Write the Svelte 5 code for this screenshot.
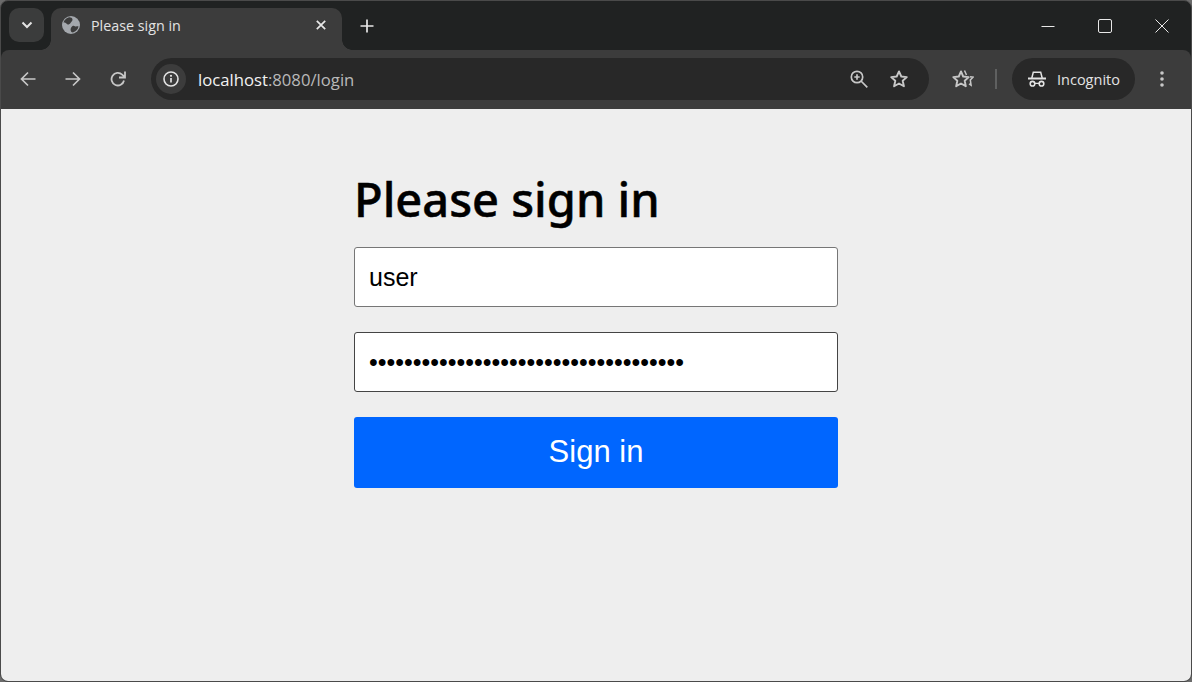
<script lang="ts">
  let username = $state("user");
  let password = $state("ffffffffffffffffffffffffffffffffffff");
  const host = "localhost";
  const rest = ":8080/login";
</script>

<div class="window">
  <header class="tabstrip">
    <button class="tab-search" aria-label="Search tabs">
      <svg width="12" height="8" viewBox="0 0 12 8"><path d="M1.5 1.5 6 6l4.500-4.500" fill="none" stroke="#e3e3e3" stroke-width="2"/></svg>
    </button>
    <div class="tab">
      <svg class="globe" width="18" height="18" viewBox="0 0 18 18">
        <circle cx="9" cy="9" r="9" fill="#a4a8ad"/>
        <path d="M6.500 1.500C4 2.300 2.200 4.200 1.500 6.500c1.500-.3 2.500.5 3.500 1.500s2.500.5 3.500-1S10.500 5 10.500 3.500 8 1 6.500 1.500z" fill="#3c3c3c"/>
        <path d="M16.500 10.500c-.5 2.800-2.500 4.800-5 5.800-1.500.3-2.500-.3-2.800-1.800-.3-1.500.3-3.500 1.800-4.500s2.500.5 3.500.5 1.500-.5 2.500 0z" fill="#3c3c3c"/>
      </svg>
      <span class="tab-title">Please sign in</span>
      <svg class="tab-close" width="10" height="10" viewBox="0 0 10 10"><path d="M.8.800l8.400 8.400M9.200.800.800 9.200" stroke="#e8e8e8" stroke-width="1.700"/></svg>
    </div>
    <button class="new-tab" aria-label="New tab">
      <svg width="14" height="14" viewBox="0 0 14 14"><path d="M7 .5v13M.5 7h13" stroke="#e8e8e8" stroke-width="1.700"/></svg>
    </button>
    <div class="window-controls">
      <svg width="14" height="14" viewBox="0 0 14 14"><path d="M.5 7.500h13" stroke="#e8e8e8"/></svg>
      <svg width="14" height="14" viewBox="0 0 14 14"><rect x=".5" y=".5" width="13" height="13" rx="1.500" fill="none" stroke="#e8e8e8"/></svg>
      <svg width="14" height="14" viewBox="0 0 14 14"><path d="M.5.500l13 13M13.500.500l-13 13" stroke="#e8e8e8"/></svg>
    </div>
  </header>

  <nav class="toolbar">
    <div class="nav-buttons">
      <svg width="16" height="16" viewBox="0 0 16 16"><path d="M15.500 8H1.500M8 1.500 1.500 8 8 14.500" fill="none" stroke="#c7c7c7" stroke-width="1.700"/></svg>
      <svg width="16" height="16" viewBox="0 0 16 16"><path d="M.5 8h14M8 1.500 14.500 8 8 14.500" fill="none" stroke="#c7c7c7" stroke-width="1.700"/></svg>
      <svg width="16" height="16" viewBox="0 0 16 16"><path d="M14 9.500A6.300 6.300 0 1 1 12.200 3.600L14.500 5.800M15 .5v6H9" fill="none" stroke="#c7c7c7" stroke-width="1.800"/></svg>
    </div>
    <div class="omnibox">
      <span class="site-info">
        <svg width="16" height="16" viewBox="0 0 16 16">
          <circle cx="8" cy="8" r="7" fill="none" stroke="#e3e3e3" stroke-width="1.600"/>
          <path d="M8 7v4.500" stroke="#e3e3e3" stroke-width="1.700"/>
          <circle cx="8" cy="4.800" r="1.100" fill="#e3e3e3"/>
        </svg>
      </span>
      <span class="url"><span class="url-host">{host}</span>{rest}</span>
      <svg class="zoom-icon" width="18" height="18" viewBox="0 0 18 18">
        <circle cx="7" cy="7" r="5.700" fill="none" stroke="#c7c7c7" stroke-width="1.700"/>
        <path d="M7 4.300v5.400M4.300 7h5.400M11 11l6.300 6.300" stroke="#c7c7c7" stroke-width="1.700"/>
      </svg>
      <svg class="star" width="20" height="20" viewBox="0 0 20 20">
        <path d="m10 2.400 2.300 5.100 5.500.6-4.100 3.700 1.200 5.500L10 14.500l-4.900 2.800 1.200-5.500-4.100-3.700 5.500-.6z" fill="none" stroke="#c7c7c7" stroke-width="1.900" stroke-linejoin="round"/>
      </svg>
    </div>
    <svg class="star-list" width="22" height="20" viewBox="0 0 22 20">
      <path d="m9 2.400 2.200 5.100 5.500.6-4 3.700 1.100 5.400L9 14.500l-4.800 2.700 1.100-5.400-4-3.700 5.500-.6z" fill="none" stroke="#c7c7c7" stroke-width="1.900" stroke-linejoin="round"/>
      <path d="M12.500 1.500l2 4.500M18 7.800l3 .4-2.700 2.700.8 5.300-2.100-1.300" fill="none" stroke="#c7c7c7" stroke-width="1.500"/>
    </svg>
    <span class="divider"></span>
    <div class="profile">
      <svg width="18" height="16" viewBox="0 0 18 16">
        <path d="M3.800 7 5.300 1.200h7.400L14.200 7" fill="none" stroke="#e3e3e3" stroke-width="1.500"/>
        <path d="M0 7.500h18" stroke="#e3e3e3" stroke-width="1.800"/>
        <circle cx="4.500" cy="12.700" r="2.300" fill="none" stroke="#e3e3e3" stroke-width="1.600"/>
        <circle cx="13.500" cy="12.700" r="2.300" fill="none" stroke="#e3e3e3" stroke-width="1.600"/>
        <path d="M6.800 12.300h4.400" stroke="#e3e3e3" stroke-width="1.300"/>
      </svg>
      <span>Incognito</span>
    </div>
    <svg class="menu" width="4" height="18" viewBox="0 0 4 18">
      <circle cx="2" cy="3" r="1.800" fill="#c7c7c7"/>
      <circle cx="2" cy="9" r="1.800" fill="#c7c7c7"/>
      <circle cx="2" cy="15" r="1.800" fill="#c7c7c7"/>
    </svg>
  </nav>

  <main class="page">
    <form class="signin" onsubmit={(event) => event.preventDefault()}>
      <h2>Please sign in</h2>
      <input type="text" bind:value={username} aria-label="Username" />
      <input type="password" bind:value={password} aria-label="Password" />
      <button type="submit" class="submit">Sign in</button>
    </form>
  </main>
</div>

<style>
:global(body) {
  background: #6b6b6b;
}

.window {
  height: 682px;
  box-sizing: border-box;
  display: flex;
  flex-direction: column;
  overflow: hidden;
  border: 1px solid #4a4a4a;
  border-radius: 8px;
  background: #202222;
  font-family: "Open Sans", "Noto Sans", sans-serif;
}

.tabstrip {
  height: 49px;
  flex: none;
  display: flex;
  align-items: flex-start;
  padding: 7px 0 0 8px;
  box-sizing: border-box;
}

.tab-search {
  width: 35px;
  height: 34px;
  padding: 0;
  border: 0;
  border-radius: 10px;
  background: #3b3c3c;
  display: flex;
  align-items: center;
  justify-content: center;
}

.tab {
  position: relative;
  width: 291px;
  height: 42px;
  margin-left: 7px;
  padding: 0 16px 8px 11px;
  box-sizing: border-box;
  display: flex;
  align-items: center;
  background: #3c3c3c;
  border-radius: 10px 10px 0 0;
}

.tab::before,
.tab::after {
  content: "";
  position: absolute;
  bottom: 0;
  width: 10px;
  height: 10px;
}

.tab::before {
  left: -10px;
  background: radial-gradient(circle at 0 0, #202222 9.5px, #3c3c3c 10px);
}

.tab::after {
  right: -10px;
  background: radial-gradient(circle at 100% 0, #202222 9.5px, #3c3c3c 10px);
}

.tab-title {
  margin-left: 11px;
  flex: 1;
  font-size: 14.3px;
  color: #e3e3e3;
}

.new-tab {
  margin: 11px 0 0 18px;
  padding: 0;
  width: 14px;
  height: 14px;
  border: 0;
  background: none;
  display: flex;
}

.window-controls {
  margin-left: auto;
  padding: 11px 22px 0 0;
  display: flex;
  gap: 43px;
}

.toolbar {
  height: 59px;
  flex: none;
  display: flex;
  align-items: center;
  background: #3c3c3c;
  border-radius: 8px 8px 0 0;
  box-sizing: border-box;
  padding: 0 19px 1px 19px;
}

.nav-buttons {
  display: flex;
  gap: 29px;
}

.omnibox {
  width: 778px;
  height: 42px;
  margin-left: 25px;
  padding: 0 20px 0 5px;
  box-sizing: border-box;
  display: flex;
  align-items: center;
  background: #282828;
  border-radius: 21px;
}

.site-info {
  width: 30px;
  height: 30px;
  border-radius: 50%;
  background: #3c3c3c;
  display: flex;
  align-items: center;
  justify-content: center;
}

.url {
  margin-left: 12px;
  flex: 1;
  font-size: 16.7px;
  color: #b9b9b9;
}

.url-host {
  color: #f2f2f2;
}

.star {
  margin-left: 21px;
}

.star-list {
  margin-left: 23px;
  flex: none;
}

.divider {
  width: 2px;
  height: 20px;
  margin-left: 21px;
  background: #5f6060;
  flex: none;
}

.profile {
  width: 123px;
  height: 42px;
  margin-left: 15px;
  flex: none;
  box-sizing: border-box;
  padding-left: 16px;
  display: flex;
  align-items: center;
  gap: 11px;
  border-radius: 21px;
  background: #282828;
  font-size: 14.5px;
  color: #e3e3e3;
}

.menu {
  margin-left: 25px;
  flex: none;
}

.page {
  flex: 1;
  background: #eeeeee;
  display: flex;
  justify-content: center;
}

.signin {
  width: 484px;
  padding-top: 55px;
  display: flex;
  flex-direction: column;
  align-items: stretch;
}

h2 {
  margin: 0 0 13px;
  font-family: "Noto Sans", "Open Sans", sans-serif;
  font-size: 47px;
  line-height: 70px;
  font-weight: 500;
  -webkit-text-stroke: 0.5px #000;
  color: #000;
}

input {
  height: 60px;
  box-sizing: border-box;
  margin: 0 0 25px;
  padding: 0 14px;
  border: 1px solid #767676;
  border-radius: 3px;
  background: #fff;
  outline: 0;
  font-family: "Liberation Sans", Arial, sans-serif;
  font-size: 25px;
  color: #000;
}

input[type="password"] {
  border-color: #444;
}

.submit {
  height: 71px;
  padding: 0 0 2px;
  border: 0;
  border-radius: 3px;
  background: #0066ff;
  font-family: "Liberation Sans", Arial, sans-serif;
  font-size: 31px;
  color: #fff;
}
</style>
